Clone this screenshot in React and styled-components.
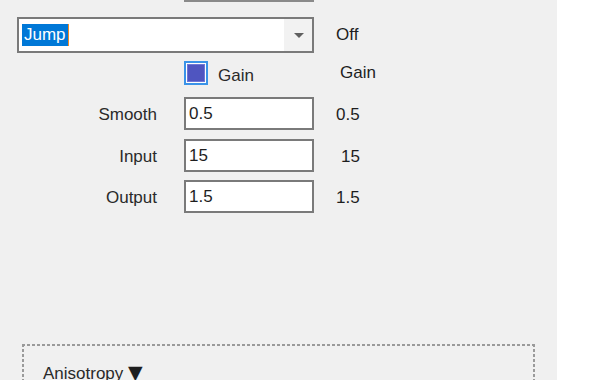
import React from "react";
import styled, { createGlobalStyle } from "styled-components";

const GlobalStyle = createGlobalStyle`
  html, body {
    margin: 0;
    padding: 0;
    background: #ffffff;
  }
  body {
    font-family: "Liberation Sans", Arial, sans-serif;
    font-size: 17px;
    color: #1e1e1e;
  }
`;

const Panel = styled.div`
  width: 557px;
  height: 380px;
  background: #f0f0f0;
  overflow: hidden;
`;

const StubField = styled.div`
  margin-left: 184px;
  width: 126px;
  height: 0;
  border: 2px solid #8a8a8a;
  border-top: none;
  background: #ffffff;
`;

const Row = styled.div`
  display: grid;
  grid-template-columns: 184px 130px 1fr;
  align-items: center;
  height: ${(p) => p.$height}px;
  margin-top: ${(p) => p.$gap}px;
`;

const FieldLabel = styled.label`
  text-align: right;
  padding-right: 27px;
  padding-top: 2px;
  color: #2a2a2a;
`;

const Value = styled.span`
  padding-left: ${(p) => 22 + (p.$indent || 0)}px;
  padding-top: ${(p) => p.$drop || 0}px;
  color: #1e1e1e;
`;

const Combo = styled.div`
  grid-column: 1 / 3;
  margin-left: 17px;
  height: 36px;
  box-sizing: border-box;
  border: 2px solid #7a7a7a;
  background: #ffffff;
  display: flex;
  align-items: stretch;
`;

const ComboText = styled.div`
  flex: 1;
  display: flex;
  align-items: center;
  padding-left: 3px;
`;

const Selection = styled.span`
  background: #0078d7;
  color: #ffffff;
  padding: 1px 2px 1px 2px;
  line-height: 20px;
  border-right: 1px solid #f08a24;
`;

const DropButton = styled.div`
  width: 28px;
  background: #f2f2f2;
  display: flex;
  align-items: center;
  justify-content: center;
`;

const Arrow = styled.span`
  width: 0;
  height: 0;
  border-left: 5px solid transparent;
  border-right: 5px solid transparent;
  border-top: 5px solid #606060;
  margin-left: 2px;
`;

const CheckLine = styled.div`
  grid-column: 2;
  display: flex;
  align-items: center;
  gap: 10px;
`;

const CheckBox = styled.span`
  width: 24px;
  height: 24px;
  box-sizing: border-box;
  border: 2px solid #3a93e8;
  padding: 1px;
  background: #ffffff;
  display: flex;
`;

const CheckFill = styled.span`
  flex: 1;
  box-sizing: border-box;
  background: #4f55c0;
  border: 1px solid #7077d6;
`;

const CheckLabel = styled.span`
  padding-top: 6px;
  color: #2a2a2a;
`;

const TextBox = styled.div`
  height: 33px;
  box-sizing: border-box;
  border: 2px solid #7a7a7a;
  background: #ffffff;
  display: flex;
  align-items: center;
  padding-left: 3px;
  color: #1e1e1e;
`;

const GroupBox = styled.fieldset`
  margin: 131px 0 0 22px;
  width: 513px;
  height: 80px;
  box-sizing: border-box;
  border: none;
  padding: 0;
  background:
    repeating-linear-gradient(90deg, #9a9a9a 0 3px, transparent 3px 5px) top left / 100% 2px no-repeat,
    repeating-linear-gradient(180deg, #9a9a9a 0 3px, transparent 3px 5px) top left / 2px 100% no-repeat,
    repeating-linear-gradient(180deg, #9a9a9a 0 3px, transparent 3px 5px) top right / 2px 100% no-repeat;
`;

const GroupTitle = styled.div`
  padding: 18px 0 0 21px;
  line-height: 20px;
  color: #2a2a2a;
`;

const Caret = styled.span`
  font-family: "DejaVu Sans", sans-serif;
  font-size: 19px;
  color: #1e1e1e;
`;

const fields = [
  { label: "Smooth", value: "0.5", gap: 13 },
  { label: "Input", value: "15", gap: 9, indent: 5 },
  { label: "Output", value: "1.5", gap: 8 },
];

export default function App() {
  return (
    <>
      <GlobalStyle />
      <Panel>
        <StubField />
        <Row $height={36} $gap={15}>
          <Combo>
            <ComboText>
              <Selection>Jump</Selection>
            </ComboText>
            <DropButton>
              <Arrow />
            </DropButton>
          </Combo>
          <Value>Off</Value>
        </Row>
        <Row $height={24} $gap={7}>
          <CheckLine>
            <CheckBox>
              <CheckFill />
            </CheckBox>
            <CheckLabel>Gain</CheckLabel>
          </CheckLine>
          <Value $indent={4}>Gain</Value>
        </Row>
        {fields.map((f) => (
          <Row key={f.label} $height={33} $gap={f.gap}>
            <FieldLabel>{f.label}</FieldLabel>
            <TextBox>{f.value}</TextBox>
            <Value $indent={f.indent} $drop={2}>
              {f.value}
            </Value>
          </Row>
        ))}
        <GroupBox>
          <GroupTitle>
            Anisotropy <Caret>▼</Caret>
          </GroupTitle>
        </GroupBox>
      </Panel>
    </>
  );
}
